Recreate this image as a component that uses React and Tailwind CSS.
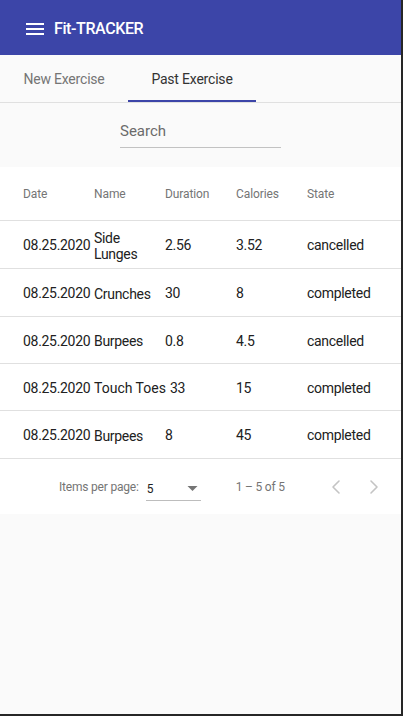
import { ChevronLeft, ChevronRight } from 'lucide-react';

const exercises = [
  { date: '08.25.2020', name: 'Side Lunges', duration: '2.56', calories: '3.52', state: 'cancelled', h: 'h-[48px]' },
  { date: '08.25.2020', name: 'Crunches', duration: '30', calories: '8', state: 'completed', h: 'h-[48px]' },
  { date: '08.25.2020', name: 'Burpees', duration: '0.8', calories: '4.5', state: 'cancelled', h: 'h-[47px]' },
  { date: '08.25.2020', name: 'Touch Toes', duration: '33', calories: '15', state: 'completed', h: 'h-[47px]', wide: true },
  { date: '08.25.2020', name: 'Burpees', duration: '8', calories: '45', state: 'completed', h: 'h-[48px]' },
];

const MenuIcon = () => (
  <svg width="24" height="24" viewBox="0 0 24 24" fill="white">
    <path d="M3 18h18v-2H3v2zm0-5h18v-2H3v2zm0-7v2h18V6H3z" />
  </svg>
);

const App = () => {
  return (
    <div className="w-[403px] h-[716px] bg-[#262626] overflow-hidden" style={{ fontFamily: 'Roboto, "Liberation Sans", sans-serif' }}>
      <div className="w-[401px] h-[714px] bg-[#fafafa] flex flex-col">
        {/* toolbar */}
        <div className="h-[55px] bg-[#3c45a8] flex items-center pl-[23px] pt-[3px] gap-[7px] shrink-0">
          <MenuIcon />
          <span className="text-white text-[16px] font-medium tracking-[-0.4px]">Fit-TRACKER</span>
        </div>

        {/* tabs */}
        <div className="h-[48px] flex border-b border-[#e0e0e0] shrink-0">
          <div className="w-[128px] flex items-center justify-center text-[14px] text-[#757575] tracking-[-0.2px] pt-[2px]">New Exercise</div>
          <div className="w-[128px] flex flex-col">
            <div className="flex-1 flex items-center justify-center text-[14px] text-[#333333] tracking-[-0.2px] pt-[3px]">Past Exercise</div>
            <div className="h-[2px] bg-[#3c45a8]" />
          </div>
        </div>

        {/* search */}
        <div className="h-[64px] flex justify-center shrink-0">
          <div className="w-[161px] mt-[18px] h-[27px] border-b border-[#c2c2c2] text-[15px] text-[#6b6b6b] leading-[20px]">
            Search
          </div>
        </div>

        {/* table */}
        <div className="bg-white">
          <div className="h-[54px] flex items-center pl-[23px] pr-[24px] border-b border-[#e0e0e0] text-[12px] text-[#757575] tracking-[-0.1px]">
            <div className="w-[71px]">Date</div>
            <div className="w-[71px]">Name</div>
            <div className="w-[71px]">Duration</div>
            <div className="w-[71px]">Calories</div>
            <div className="flex-1">State</div>
          </div>
          {exercises.map((ex, i) => (
            <div key={i} className={`${ex.h} flex items-center pl-[23px] pr-[24px] pt-[2px] border-b border-[#e0e0e0] text-[14px] text-[#212121] tracking-[-0.3px]`}>
              <div className="w-[71px] whitespace-nowrap">{ex.date}</div>
              <div className={ex.wide ? 'w-[76px] whitespace-nowrap tracking-normal' : 'w-[71px] leading-[16px]'}>{ex.name}</div>
              <div className={ex.wide ? 'w-[66px]' : 'w-[71px]'}>{ex.duration}</div>
              <div className="w-[71px]">{ex.calories}</div>
              <div className="flex-1">{ex.state}</div>
            </div>
          ))}

          {/* paginator */}
          <div className="h-[55px] flex items-center text-[12px] text-[#757575] tracking-[-0.2px] pt-[1px]">
            <div className="ml-[59px] mr-[7px]">Items per page:</div>
            <div className="w-[55px] h-[24px] flex items-center justify-between border-b border-[#bdbdbd] mt-[4px] pl-[1px] pr-[3px]">
              <span className="text-[#212121] text-[12px]">5</span>
              <svg width="11" height="5" viewBox="0 0 10 5">
                <path d="M0 0l5 5 5-5z" fill="#757575" />
              </svg>
            </div>
            <div className="ml-[35px]">1 – 5 of 5</div>
            <div className="ml-auto mr-[15px] flex items-center gap-[14px]">
              <ChevronLeft size={24} strokeWidth={1.6} color="#c4c4c4" />
              <ChevronRight size={24} strokeWidth={1.6} color="#c4c4c4" />
            </div>
          </div>
        </div>
      </div>
    </div>
  );
};

export default App;
